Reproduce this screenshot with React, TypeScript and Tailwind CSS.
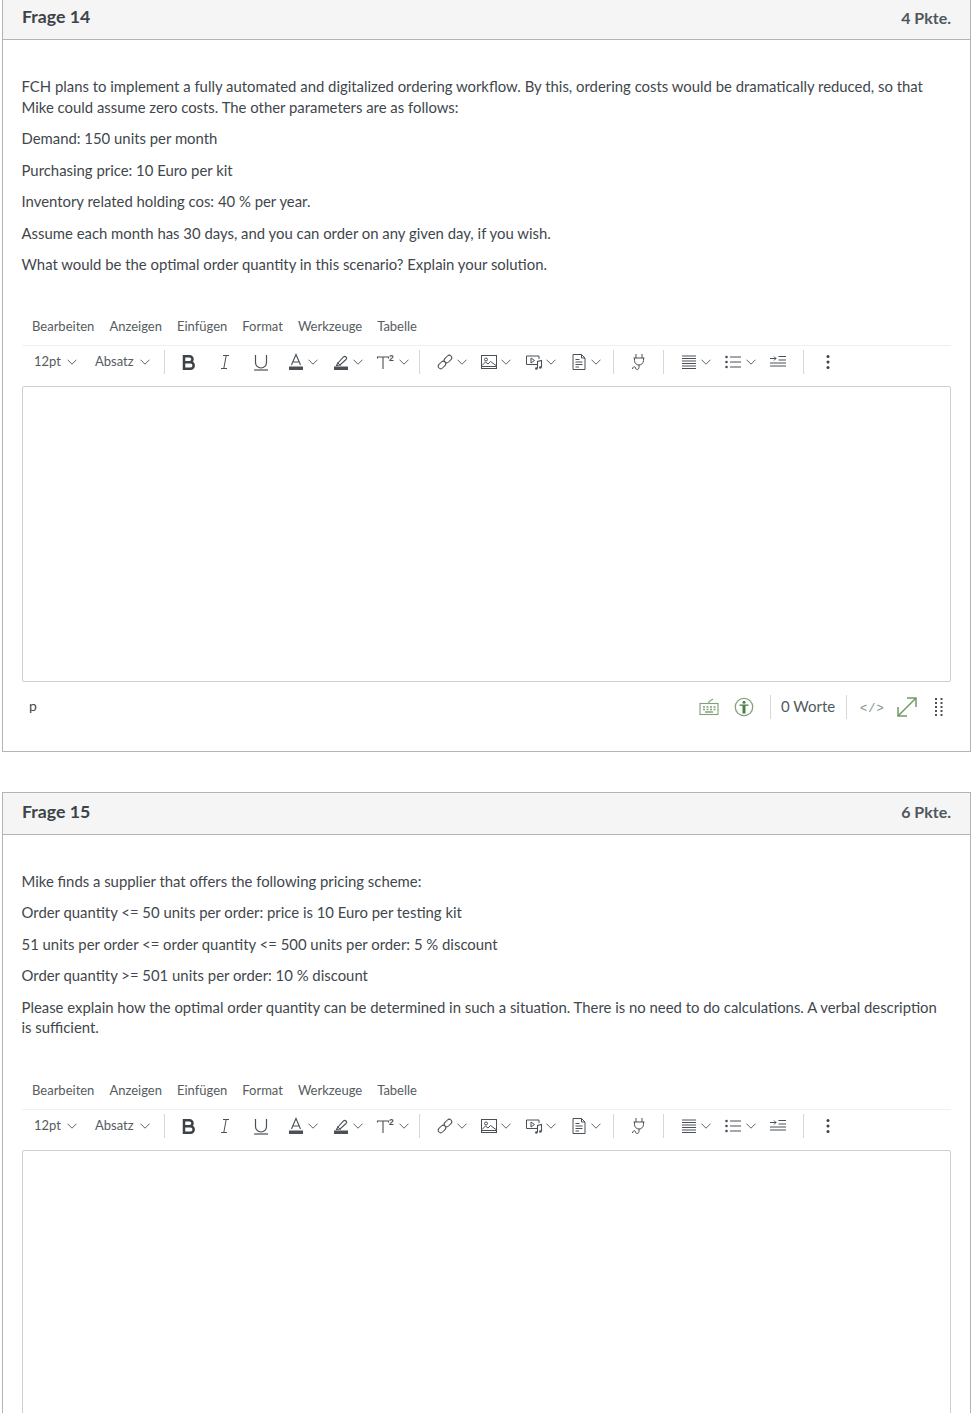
import React from "react";

const S = ({ w = 20, h = 20, vb = "0 0 20 20", children, c = "" }: { w?: number; h?: number; vb?: string; children: React.ReactNode; c?: string }) => (
  <svg width={w} height={h} viewBox={vb} fill="none" stroke="currentColor" strokeWidth={1} className={"shrink-0 " + c}>
    {children}
  </svg>
);

const Chevron = () => (
  <svg width="10" height="6" viewBox="0 0 10 6" fill="none" stroke="#5f6468" strokeWidth="1" className="shrink-0">
    <path d="M0.5 0.7 L5 5.2 L9.5 0.7" />
  </svg>
);

const Sep = () => <div className="w-px h-[24px] bg-[#d8d8d8] shrink-0" />;

const Split = ({ children }: { children: React.ReactNode }) => (
  <div className="flex items-center gap-[2px] w-[32px] shrink-0">
    <div className="w-[20px] h-[20px] flex items-center justify-center text-[#4a5055]">{children}</div>
    <Chevron />
  </div>
);

const Cell = ({ children }: { children: React.ReactNode }) => (
  <div className="w-[20px] h-[20px] flex items-center justify-center text-[#4a5055] shrink-0">{children}</div>
);

const Toolbar = () => (
  <div className="flex items-center h-[33px] text-[#4a5055]">
    <div className="flex items-center gap-[6px] pl-3 w-[62px] text-[13px] text-[#555b60] shrink-0">
      <span>12pt</span>
      <Chevron />
    </div>
    <div className="flex items-center gap-[6px] pl-[11px] w-[80px] text-[13px] text-[#555b60] shrink-0">
      <span>Absatz</span>
      <Chevron />
    </div>
    <Sep />
    <div className="flex items-center gap-4 pl-[14px] pr-[15px]">
      <Cell>
        <svg width="14" height="15" viewBox="0 0 14 15" fill="none" stroke="#3c4247" strokeWidth="2.500" className="shrink-0">
          <path d="M2 1.300h5.500a3 3 0 0 1 0 6H2zM2 7.300h6.500a3.100 3.100 0 0 1 0 6.400H2z" />
        </svg>
      </Cell>
      <Cell>
        <S>
          <path d="M8 3.500h6M6 16.500h6M11.200 3.500 8.800 16.500" />
        </S>
      </Cell>
      <Cell>
        <S>
          <path d="M4.500 3v7.500a5.500 5.500 0 0 0 11 0V3" strokeWidth="1.200" />
          <path d="M3 18h14" strokeWidth="1.200" />
        </S>
      </Cell>
    </div>
    <div className="flex items-center gap-[13px] pr-[10px]">
      <Split>
        <S>
          <path d="M5.500 13 10 2.500 14.500 13M7 10h6" strokeWidth="1.100" />
          <rect x="3" y="14.500" width="14" height="3.500" fill="currentColor" stroke="none" />
        </S>
      </Split>
      <Split>
        <S>
          <path d="M6.500 11.500 12.500 5q1.200-1.200 2.500 0t0 2.500l-6 5.500-3.500 .5z" strokeWidth="1.100" />
          <path d="M6.500 10.500 9.500 13.500" />
          <rect x="3" y="14.500" width="14" height="3.500" fill="currentColor" stroke="none" />
        </S>
      </Split>
      <div className="flex items-center gap-[3px] w-[33px] shrink-0">
        <div className="w-[20px] h-[20px] flex items-center justify-center text-[#4a5055]">
          <S>
            <path d="M1.500 6.500V5h11v1.500M7 5v12" strokeWidth="1.100" />
            <text x="13" y="9" fontSize="8.500" fontWeight="700" fill="currentColor" stroke="none" fontFamily="Liberation Sans, sans-serif">2</text>
          </S>
        </div>
        <Chevron />
      </div>
    </div>
    <Sep />
    <div className="flex items-center gap-3 pl-[15px] pr-[12px]">
      <Split>
        <S>
          <g transform="rotate(-45 10 10)">
            <rect x="1.500" y="7.500" width="8.500" height="5" rx="2.500" />
            <rect x="10" y="7.500" width="8.500" height="5" rx="2.500" />
          </g>
        </S>
      </Split>
      <Split>
        <S>
          <rect x="2.500" y="3.500" width="15" height="13" />
          <path d="M3 13.500l3.500-3.500 2.500 2 2.500-2.500 5.500 4M3 14.500h14" />
          <circle cx="7" cy="7.500" r="1.500" />
        </S>
      </Split>
      <div className="ml-px">
        <Split>
          <S>
            <path d="M13 12.500H2.500v-8.500H15v3" />
            <path d="M7 6l3.500 2.500L7 11z" />
            <path d="M13.500 16.500v-7l4-1v7" strokeWidth="1.100" />
            <circle cx="12.300" cy="16.500" r="1.200" fill="currentColor" stroke="none" />
            <circle cx="16.300" cy="15.500" r="1.200" fill="currentColor" stroke="none" />
          </S>
        </Split>
      </div>
      <div className="ml-px">
        <Split>
          <S>
            <path d="M4 2.500h8.500l3.500 3.500v11.500H4z" />
            <path d="M12.500 2.500V6H16" />
            <path d="M6.500 7.500h4M6.500 10h7M6.500 12.500h7M6.500 15h3.500" strokeWidth="1.200" />
          </S>
        </Split>
      </div>
    </div>
    <Sep />
    <div className="pl-[15px] pr-[14px]">
      <Cell>
        <S>
          <path d="M7 2v4M13 2v4M4.500 6h11M5.500 6v2.500a4.500 4.500 0 0 0 9 0V6M10 13v2.500c0 2.500-3.500 2.500-3.500 .5s-3-1.500-3 1" />
        </S>
      </Cell>
    </div>
    <Sep />
    <div className="flex items-center gap-3 pl-[15px] pr-[15px]">
      <Split>
        <S>
          <path d="M3 4h14M3 6.500h14M3 9h14M3 11.500h14M3 14h14M3 16.500h14" />
        </S>
      </Split>
      <div className="flex items-center gap-[3px] w-[33px] shrink-0">
        <Cell>
          <S>
            <circle cx="3.500" cy="5" r="1.300" fill="currentColor" stroke="none" />
            <circle cx="3.500" cy="10" r="1.300" fill="currentColor" stroke="none" />
            <circle cx="3.500" cy="15" r="1.300" fill="currentColor" stroke="none" />
            <path d="M7 5h11M7 10h11M7 15h11" />
          </S>
        </Cell>
        <Chevron />
      </div>
      <Cell>
        <S>
          <path d="M2 6.500h6M6 4.500l2 2-2 2M10.500 4.500H18M10.500 8H18M2 11h16M2 14h16" />
        </S>
      </Cell>
    </div>
    <Sep />
    <div className="pl-[14px]">
      <Cell>
        <svg width="4" height="16" viewBox="0 0 4 16" fill="#3c4247">
          <circle cx="2" cy="2.500" r="1.500" />
          <circle cx="2" cy="8" r="1.500" />
          <circle cx="2" cy="13.500" r="1.500" />
        </svg>
      </Cell>
    </div>
  </div>
);

const Footer = () => (
  <div className="flex items-center justify-between h-[69px] pl-[7px] pb-[18px] text-[#5d6a55]">
    <span className="text-[14px] text-[#444a4f] -mt-[3px]">p</span>
    <div className="flex items-center">
      <svg width="20" height="18" viewBox="0 0 20 18" fill="none" stroke="#7fa377" strokeWidth="1.100" className="shrink-0">
        <rect x="1" y="5.500" width="18" height="11" />
        <path d="M10 5.500V3.500l4-2.500" />
        <path d="M4 9h2M7.500 9h2M11 9h2M14.500 9h2M4 11.500h2M7.500 11.500h2M11 11.500h2M14.500 11.500h2M6 14h8" strokeWidth="1.300" />
      </svg>
      <svg width="20" height="20" viewBox="0 0 20 20" fill="none" className="shrink-0 ml-[15px]">
        <circle cx="10" cy="10" r="8.700" stroke="#7fa377" strokeWidth="1.300" />
        <circle cx="10" cy="5.300" r="1.500" fill="#4f7d4a" />
        <path d="M5.500 7.500h9v1.200h-3v7.800h-3V8.700h-3z" fill="#4f7d4a" />
      </svg>
      <div className="w-px h-[24px] bg-[#d8d8d8] ml-[16px]" />
      <span className="ml-[10px] w-[54px] text-[15px] leading-none text-[#505a5f] whitespace-nowrap -mt-[2px]">0 Worte</span>
      <div className="w-px h-[24px] bg-[#d8d8d8] ml-[11px]" />
      <span className="ml-[13px] w-[24px] text-[12px] tracking-[1px] text-[#7c9480] whitespace-nowrap font-['Liberation_Mono',monospace] mt-[4px]">&lt;/&gt;</span>
      <svg width="22" height="22" viewBox="0 0 22 22" fill="none" stroke="#6f9a66" strokeWidth="1.500" className="shrink-0 ml-[12px]">
        <path d="M2 20 20 2M11 2h9v9M2 11v9h9" />
      </svg>
      <svg width="10" height="18" viewBox="0 0 10 18" fill="#4b5257" className="shrink-0 ml-[16px] mr-[7px]">
        {[1, 5, 9, 13, 17].map((y) => (
          <g key={y}>
            <rect x="1" y={y - 1} width="2" height="2" />
            <rect x="6.500" y={y - 1} width="2" height="2" />
          </g>
        ))}
      </svg>
    </div>
  </div>
);

const Editor = ({ mt }: { mt: string }) => (
  <div className={mt}>
    <div className="flex items-center gap-[15px] pl-[10px] h-[20px] text-[13px] text-[#565c60]">
      <span>Bearbeiten</span>
      <span>Anzeigen</span>
      <span>Einfügen</span>
      <span>Format</span>
      <span>Werkzeuge</span>
      <span>Tabelle</span>
    </div>
    <div className="mt-[8px] border-t border-[#f0f0f0]">
      <Toolbar />
    </div>
    <div className="mt-[7px] h-[296px] border border-[#cfcfcf] rounded-[2px] bg-white" />
    <Footer />
  </div>
);

const Card = ({ title, pts, top, children }: { title: string; pts: string; top: string; children: React.ReactNode }) => (
  <section className={"mx-[2px] w-[969px] border border-[#b4b4b4] bg-white " + top}>
    <header className="flex items-center justify-between h-[42px] pl-[19px] pr-[19px] pb-[2px] bg-[#f5f5f5] border-b border-[#b4b4b4]">
      <h2 className="text-[17.700px] font-bold text-[#3c4449]">{title}</h2>
      <span className="text-[16px] font-bold text-[#50575c]">{pts}</span>
    </header>
    <div className="px-[19px] pt-[36px]">{children}</div>
  </section>
);

const P = ({ children }: { children: React.ReactNode }) => <p className="mb-[11px] last:mb-0">{children}</p>;

export default function App() {
  return (
    <div className="h-[1413px] overflow-hidden bg-white font-['Lato',sans-serif]">
      <Card title="Frage 14" pts="4 Pkte." top="-mt-[3px]">
        <div className="text-[14.880px] leading-[20.500px] text-[#3f474c] -ml-[0.5px] pr-[8px]">
          <P>
            FCH plans to implement a fully automated and digitalized ordering workflow. By this, ordering costs would be dramatically reduced, so that Mike could assume zero costs. The other parameters are as follows:
          </P>
          <P>Demand: 150 units per month</P>
          <P>Purchasing price: 10 Euro per kit</P>
          <P>Inventory related holding cos: 40 % per year.</P>
          <P>Assume each month has 30 days, and you can order on any given day, if you wish.</P>
          <P>What would be the optimal order quantity in this scenario? Explain your solution.</P>
        </div>
        <Editor mt="mt-[42px]" />
      </Card>
      <Card title="Frage 15" pts="6 Pkte." top="mt-[40px]">
        <div className="text-[14.880px] leading-[20.500px] text-[#3f474c] -ml-[0.5px] pr-[8px]">
          <P>Mike finds a supplier that offers the following pricing scheme:</P>
          <P>Order quantity &lt;= 50 units per order: price is 10 Euro per testing kit</P>
          <P>51 units per order &lt;= order quantity &lt;= 500 units per order: 5 % discount</P>
          <P>Order quantity &gt;= 501 units per order: 10 % discount</P>
          <P>
            Please explain how the optimal order quantity can be determined in such a situation. There is no need to do calculations. A verbal description is sufficient.
          </P>
        </div>
        <Editor mt="mt-[43px]" />
      </Card>
    </div>
  );
}
